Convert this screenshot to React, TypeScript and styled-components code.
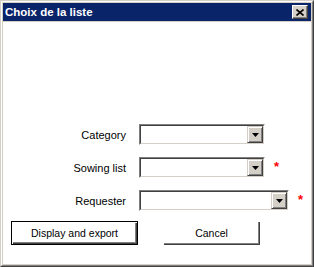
import React from "react";
import styled, { createGlobalStyle } from "styled-components";

const Global = createGlobalStyle`
  html, body { margin: 0; padding: 0; background: #d4d0c8; }
  body { font-family: "Liberation Sans", Arial, sans-serif; }
`;

const Frame = styled.div`
  box-sizing: border-box;
  width: 314px;
  height: 267px;
  display: flex;
  flex-direction: column;
  background: #d4d0c8;
  border-top: 1px solid #d4d0c8;
  border-left: 1px solid #d4d0c8;
  border-right: 1px solid #404040;
  border-bottom: 1px solid #404040;
`;

const Inner = styled.div`
  flex: 1;
  display: flex;
  flex-direction: column;
  border-top: 1px solid #ffffff;
  border-left: 1px solid #ffffff;
  border-right: 1px solid #808080;
  border-bottom: 1px solid #808080;
  padding: 1px;
`;

const TitleBar = styled.div`
  height: 18px;
  background: #0a246a;
  display: flex;
  align-items: center;
  justify-content: space-between;
  padding: 0 3px 0 2px;
`;

const TitleText = styled.span`
  color: #ffffff;
  font-weight: bold;
  font-size: 11.5px;
`;

const CloseBtn = styled.div`
  box-sizing: border-box;
  width: 16px;
  height: 14px;
  background: #d4d0c8;
  border-top: 1px solid #ffffff;
  border-left: 1px solid #ffffff;
  border-right: 1px solid #404040;
  border-bottom: 1px solid #404040;
  box-shadow: inset -1px -1px 0 #808080;
  display: flex;
  align-items: center;
  justify-content: center;
`;

const Client = styled.div`
  flex: 1;
  margin-top: 1px;
  background: #ffffff;
  display: flex;
  flex-direction: column;
  padding-top: 102px;
`;

const Form = styled.div`
  display: grid;
  grid-template-columns: 123px auto;
  column-gap: 13px;
  row-gap: 12px;
  align-items: center;
`;

const Label = styled.span`
  text-align: right;
  font-size: 11px;
  color: #000;
`;

const FieldRow = styled.div`
  display: flex;
  align-items: center;
  gap: 9px;
`;

const Combo = styled.div<{ $w: number }>`
  box-sizing: border-box;
  width: ${(p) => p.$w}px;
  height: 21px;
  background: #ffffff;
  border-top: 1px solid #808080;
  border-left: 1px solid #808080;
  border-right: 1px solid #ffffff;
  border-bottom: 1px solid #ffffff;
  display: flex;
`;

const ComboInner = styled.div`
  flex: 1;
  display: flex;
  justify-content: flex-end;
  border-top: 1px solid #404040;
  border-left: 1px solid #404040;
  border-right: 1px solid #d4d0c8;
  border-bottom: 1px solid #d4d0c8;
`;

const DropBtn = styled.div`
  box-sizing: border-box;
  width: 16px;
  height: 17px;
  background: #d4d0c8;
  border-top: 1px solid #d4d0c8;
  border-left: 1px solid #d4d0c8;
  border-right: 1px solid #404040;
  border-bottom: 1px solid #404040;
  box-shadow: inset 1px 1px 0 #ffffff, inset -1px -1px 0 #808080;
  display: flex;
  align-items: center;
  justify-content: center;
`;

const Required = styled.span`
  color: #ff0000;
  font-size: 13px;
  font-weight: bold;
  align-self: flex-start;
  margin-top: 3px;
  line-height: 13px;
`;

const Buttons = styled.div`
  display: flex;
  gap: 25px;
  padding-left: 8px;
  margin-top: 10px;
`;

const Button = styled.button<{ $w: number; $default?: boolean }>`
  box-sizing: border-box;
  width: ${(p) => p.$w}px;
  height: 24px;
  padding: 0;
  font-family: "Liberation Sans", Arial, sans-serif;
  font-size: 10.5px;
  color: #000;
  background: #ffffff;
  border: ${(p) => (p.$default ? "1px solid #000" : "none")};
  box-shadow: inset 1px 1px 0 #ffffff, inset -1px -1px 0 #404040,
    inset -2px -2px 0 #808080;
`;

const Arrow = () => (
  <svg width="7" height="4" viewBox="0 0 7 4">
    <path d="M0 0h7L3.5 4z" fill="#000" />
  </svg>
);

const X = () => (
  <svg width="8" height="7" viewBox="0 0 8 7">
    <path d="M0.5 0.5L7.5 6.5M7.5 0.5L0.5 6.5" stroke="#000" strokeWidth="1.6" />
  </svg>
);

const Field = ({ w, required }: { w: number; required?: boolean }) => (
  <FieldRow>
    <Combo $w={w}>
      <ComboInner>
        <DropBtn>
          <Arrow />
        </DropBtn>
      </ComboInner>
    </Combo>
    {required && <Required>*</Required>}
  </FieldRow>
);

export default function App() {
  return (
    <>
      <Global />
      <Frame>
        <Inner>
          <TitleBar>
            <TitleText>Choix de la liste</TitleText>
            <CloseBtn>
              <X />
            </CloseBtn>
          </TitleBar>
          <Client>
            <Form>
              <Label>Category</Label>
              <Field w={126} />
              <Label>Sowing list</Label>
              <Field w={126} required />
              <Label>Requester</Label>
              <Field w={150} required />
            </Form>
            <Buttons>
              <Button $w={127} $default>
                Display and export
              </Button>
              <Button $w={97}>Cancel</Button>
            </Buttons>
          </Client>
        </Inner>
      </Frame>
    </>
  );
}
